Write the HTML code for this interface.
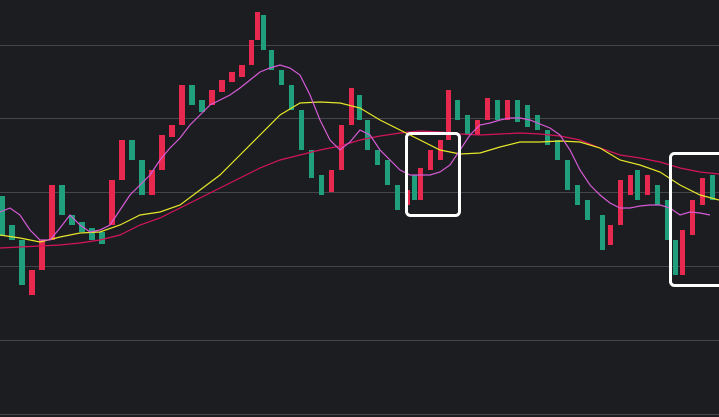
<!DOCTYPE html>
<html><head><meta charset="utf-8"><style>
html,body{margin:0;padding:0;background:#1c1d21;overflow:hidden;width:719px;height:417px}
svg{display:block}
</style></head><body>
<svg width="719" height="417" xmlns="http://www.w3.org/2000/svg">
<rect width="719" height="417" fill="#1c1d21"/>
<g stroke="#45464b" stroke-width="1">
<line x1="0" y1="45.5" x2="719" y2="45.5"/><line x1="0" y1="118.5" x2="719" y2="118.5"/>
<line x1="0" y1="192.5" x2="719" y2="192.5"/><line x1="0" y1="266.5" x2="719" y2="266.5"/>
<line x1="0" y1="340.5" x2="719" y2="340.5"/><line x1="0" y1="414.5" x2="719" y2="414.5"/>
</g>
<g fill="#1f9f7b">
<rect x="0" y="196" width="5" height="40"/>
<rect x="9" y="225" width="6" height="15"/>
<rect x="19" y="240" width="6" height="45"/>
<rect x="59" y="185" width="6" height="30"/>
<rect x="69" y="215" width="6" height="10"/>
<rect x="79" y="222" width="6" height="10"/>
<rect x="89" y="228" width="6" height="12"/>
<rect x="99" y="232" width="6" height="12"/>
<rect x="129" y="140" width="6" height="20"/>
<rect x="139" y="160" width="6" height="35"/>
<rect x="189" y="85" width="6" height="20"/>
<rect x="199" y="100" width="6" height="12"/>
<rect x="261" y="15" width="5" height="35"/>
<rect x="269" y="50" width="5" height="20"/>
<rect x="279" y="70" width="5" height="15"/>
<rect x="289" y="85" width="5" height="25"/>
<rect x="299" y="110" width="5" height="40"/>
<rect x="309" y="150" width="5" height="28"/>
<rect x="319" y="175" width="5" height="20"/>
<rect x="357" y="95" width="5" height="25"/>
<rect x="365" y="120" width="5" height="30"/>
<rect x="375" y="150" width="5" height="15"/>
<rect x="385" y="160" width="5" height="25"/>
<rect x="395" y="185" width="5" height="25"/>
<rect x="412" y="175" width="5" height="25"/>
<rect x="455" y="100" width="5" height="20"/>
<rect x="465" y="115" width="5" height="20"/>
<rect x="495" y="100" width="5" height="20"/>
<rect x="515" y="100" width="5" height="22"/>
<rect x="525" y="105" width="5" height="22"/>
<rect x="535" y="115" width="5" height="15"/>
<rect x="545" y="130" width="5" height="15"/>
<rect x="555" y="140" width="5" height="20"/>
<rect x="565" y="160" width="5" height="30"/>
<rect x="575" y="185" width="5" height="20"/>
<rect x="585" y="200" width="5" height="20"/>
<rect x="600" y="215" width="5" height="35"/>
<rect x="635" y="170" width="5" height="30"/>
<rect x="655" y="185" width="5" height="20"/>
<rect x="665" y="200" width="5" height="40"/>
<rect x="673" y="240" width="5" height="35"/>
<rect x="710" y="175" width="5" height="25"/>
</g>
<g fill="#e8294f">
<rect x="29" y="270" width="6" height="25"/>
<rect x="39" y="240" width="6" height="30"/>
<rect x="49" y="185" width="6" height="55"/>
<rect x="109" y="180" width="6" height="45"/>
<rect x="119" y="140" width="6" height="40"/>
<rect x="149" y="170" width="6" height="25"/>
<rect x="159" y="135" width="6" height="35"/>
<rect x="169" y="125" width="6" height="12"/>
<rect x="179" y="85" width="6" height="40"/>
<rect x="209" y="90" width="6" height="15"/>
<rect x="219" y="80" width="6" height="12"/>
<rect x="229" y="72" width="6" height="10"/>
<rect x="239" y="65" width="6" height="12"/>
<rect x="249" y="40" width="5" height="25"/>
<rect x="255" y="12" width="5" height="28"/>
<rect x="329" y="170" width="5" height="22"/>
<rect x="339" y="125" width="5" height="45"/>
<rect x="349" y="88" width="5" height="37"/>
<rect x="405" y="190" width="5" height="15"/>
<rect x="418" y="168" width="5" height="32"/>
<rect x="428" y="150" width="5" height="20"/>
<rect x="438" y="140" width="5" height="20"/>
<rect x="446" y="90" width="5" height="50"/>
<rect x="475" y="120" width="5" height="15"/>
<rect x="485" y="98" width="5" height="22"/>
<rect x="505" y="100" width="5" height="20"/>
<rect x="608" y="225" width="5" height="20"/>
<rect x="618" y="180" width="5" height="45"/>
<rect x="628" y="175" width="5" height="20"/>
<rect x="645" y="175" width="5" height="20"/>
<rect x="680" y="230" width="5" height="45"/>
<rect x="690" y="200" width="5" height="35"/>
<rect x="700" y="178" width="5" height="27"/>
</g>
<g fill="none" stroke-width="1.2">
<polyline stroke="#d4145a" points="0,248 20,247 40,246 60,245 80,243 100,240 120,235 140,225 160,218 180,208 200,198 220,188 240,178 260,168 280,160 300,155 320,150 340,146 360,140 380,136 400,133 420,131 440,132 460,134 480,135 500,134 520,133 540,134 560,136 580,140 600,148 620,155 640,158 660,162 680,168 700,172 719,174"/>
<polyline stroke="#e6e62a" points="0,235 20,238 40,242 60,237 80,233 100,232 120,225 140,215 160,212 180,205 200,190 220,175 240,155 260,135 280,115 300,103 320,102 340,103 360,108 380,120 400,130 420,140 440,150 460,154 480,153 500,147 520,142 540,142 560,141 580,142 600,148 620,160 640,165 660,172 680,185 700,195 719,200"/>
<polyline stroke="#d65ad6" points="0,212 10,208 20,215 30,230 40,240 50,240 60,228 70,215 80,225 90,232 100,230 110,225 120,210 130,195 140,185 150,175 160,160 170,148 180,138 190,125 200,115 210,105 220,100 230,95 240,88 250,80 260,72 270,68 280,65 290,68 300,75 310,95 320,120 330,140 340,150 350,142 360,130 370,135 380,150 390,160 400,170 410,175 420,175 430,175 440,172 450,165 460,150 470,135 480,125 490,123 500,120 510,118 520,118 530,120 540,124 550,128 560,135 570,150 580,170 590,185 600,195 610,203 620,208 630,208 640,206 650,205 660,205 670,208 680,215 690,212 700,213 710,215"/>
</g>
<rect x="406.5" y="133.5" width="53" height="82" rx="4" fill="none" stroke="#fff" stroke-width="3"/>
<rect x="670.5" y="153.5" width="60" height="132" rx="4" fill="none" stroke="#fff" stroke-width="3"/>
</svg>
</body></html>
